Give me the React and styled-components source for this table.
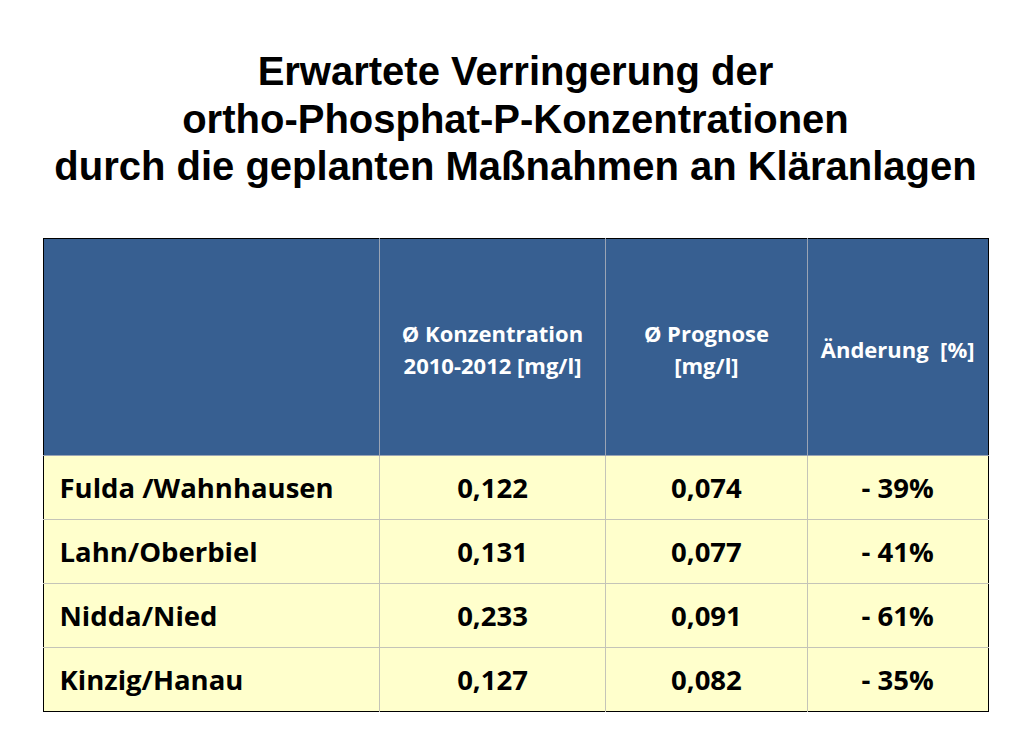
import styled, { createGlobalStyle } from "styled-components";

const GlobalStyle = createGlobalStyle`
  html, body {
    margin: 0;
    padding: 0;
    background: #ffffff;
  }
`;

const Page = styled.div`
  width: 1031px;
  height: 744px;
  display: flex;
  flex-direction: column;
  align-items: center;
  background: #ffffff;
`;

const Title = styled.h1`
  margin: 48px 0 0 0;
  font-family: "Liberation Sans", Arial, sans-serif;
  font-weight: bold;
  font-size: 40px;
  line-height: 47.5px;
  text-align: center;
  color: #000000;
`;

const Table = styled.table`
  margin: 47px 0 0 0;
  width: 946px;
  border-collapse: collapse;
  border: 1px solid #000000;
  font-family: "Open Sans", "Lato", sans-serif;
  font-weight: bold;
`;

const HeadCell = styled.th`
  height: 211px;
  padding: 5px 0 0 0;
  background: #375f91;
  color: #ffffff;
  font-size: 22px;
  line-height: 32px;
  font-weight: bold;
  text-align: center;
  vertical-align: middle;
  width: ${(p) => p.$w}px;
  border-left: 1px solid #9aa4b4;
  border-bottom: 1px solid #9aa4b4;
  &:first-child {
    border-left: none;
  }
`;

const Cell = styled.td`
  height: 63px;
  padding: 0;
  background: #ffffcc;
  color: #000000;
  font-size: 27.5px;
  text-align: ${(p) => (p.$left ? "left" : "center")};
  padding-left: ${(p) => (p.$left ? "16px" : "0")};
  vertical-align: middle;
  border-left: 1px solid #c4c4b8;
  border-top: 1px solid #c4c4b8;
  &:first-child {
    border-left: none;
  }
`;

const rows = [
  ["Fulda /Wahnhausen", "0,122", "0,074", "- 39%"],
  ["Lahn/Oberbiel", "0,131", "0,077", "- 41%"],
  ["Nidda/Nied", "0,233", "0,091", "- 61%"],
  ["Kinzig/Hanau", "0,127", "0,082", "- 35%"],
];

const App = () => {
  return (
    <Page>
      <GlobalStyle />
      <Title>
        Erwartete Verringerung der
        <br />
        ortho-Phosphat-P-Konzentrationen
        <br />
        durch die geplanten Maßnahmen an Kläranlagen
      </Title>
      <Table>
        <thead>
          <tr>
            <HeadCell $w={337} />
            <HeadCell $w={226}>
              Ø Konzentration
              <br />
              2010-2012 [mg/l]
            </HeadCell>
            <HeadCell $w={202}>
              Ø Prognose
              <br />
              [mg/l]
            </HeadCell>
            <HeadCell $w={180}>Änderung&nbsp;&nbsp;[%]</HeadCell>
          </tr>
        </thead>
        <tbody>
          {rows.map((r) => (
            <tr key={r[0]}>
              <Cell $left>{r[0]}</Cell>
              <Cell>{r[1]}</Cell>
              <Cell>{r[2]}</Cell>
              <Cell>{r[3]}</Cell>
            </tr>
          ))}
        </tbody>
      </Table>
    </Page>
  );
};

export default App;
